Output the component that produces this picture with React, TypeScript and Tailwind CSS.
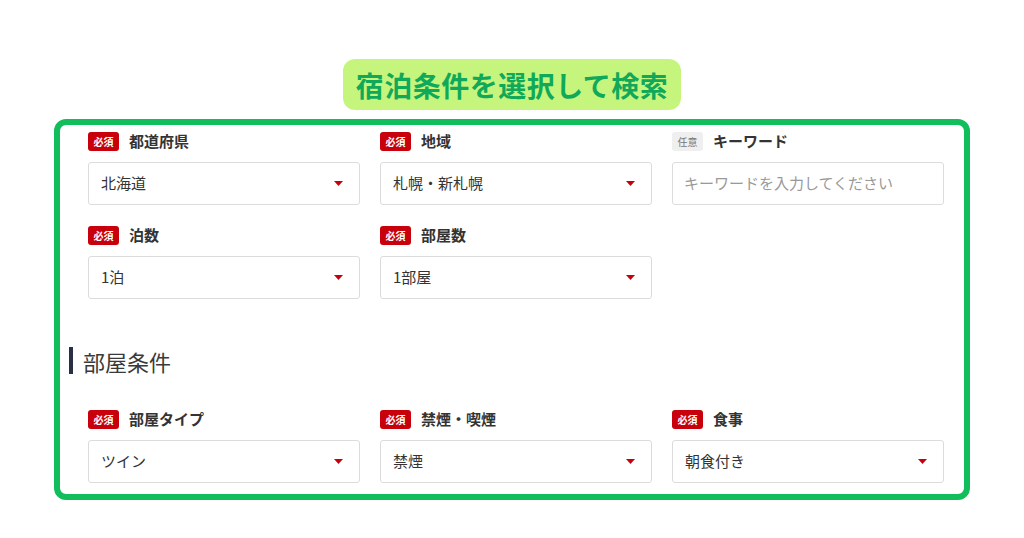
import React from 'react';

type Field = {
  label: string;
  required: boolean;
  value?: string;
  placeholder?: string;
};

const font = "font-['Noto_Sans_CJK_JP','Noto_Sans',sans-serif]";

function Badge({ required }: { required: boolean }) {
  return required ? (
    <span className="inline-flex h-[19px] w-[31px] items-center justify-center rounded-[3px] bg-[#c7000b] text-[10px] font-bold leading-none text-white">
      必須
    </span>
  ) : (
    <span className="inline-flex h-[19px] w-[31px] items-center justify-center rounded-[3px] bg-[#efefef] text-[10px] leading-none text-[#777]">
      任意
    </span>
  );
}

function FieldBox({ field }: { field: Field }) {
  return (
    <div className="flex flex-col">
      <div className="flex h-[19px] items-center gap-[10px]">
        <Badge required={field.required} />
        <span className="text-[15px] font-bold text-[#333]">{field.label}</span>
      </div>
      {field.placeholder ? (
        <div className="mt-[11px] flex h-[43px] items-center rounded-[3px] border border-[#dcdcdc] bg-white px-[11px] text-[15px] text-[#999]">
          {field.placeholder}
        </div>
      ) : (
        <div className="mt-[11px] flex h-[43px] items-center justify-between rounded-[3px] border border-[#dcdcdc] bg-white pl-[12px] pr-[16px] text-[15px] text-[#333]">
          <span>{field.value}</span>
          <svg width="9" height="5" viewBox="0 0 9 5">
            <path d="M0 0h9L4.5 5z" fill="#c7000b" />
          </svg>
        </div>
      )}
    </div>
  );
}

const topFields: (Field | null)[] = [
  { label: '都道府県', required: true, value: '北海道' },
  { label: '地域', required: true, value: '札幌・新札幌' },
  { label: 'キーワード', required: false, placeholder: 'キーワードを入力してください' },
  { label: '泊数', required: true, value: '1泊' },
  { label: '部屋数', required: true, value: '1部屋' },
  null,
];

const roomFields: Field[] = [
  { label: '部屋タイプ', required: true, value: 'ツイン' },
  { label: '禁煙・喫煙', required: true, value: '禁煙' },
  { label: '食事', required: true, value: '朝食付き' },
];

export default function App() {
  return (
    <div className={`${font} flex h-[538px] w-[1024px] flex-col items-center bg-white`}>
      {/* Title */}
      <div className="mt-[59px] flex h-[51px] items-center rounded-[12px] bg-[#c6f57e] px-[13px] text-[28px] font-bold leading-none tracking-[0.5px] text-[#10a95a]">
        宿泊条件を選択して検索
      </div>

      {/* Search panel */}
      <div className="mt-[9px] h-[381px] w-[916px] rounded-[12px] border-[6px] border-[#12bd5c] bg-white pl-[28px] pr-[20px] pt-[7px]">
        <div className="grid grid-cols-3 gap-x-[20px] gap-y-[21px]">
          {topFields.map((f, i) => (f ? <FieldBox key={i} field={f} /> : <div key={i} />))}
        </div>

        <div className="-ml-[19px] mt-[48px] flex h-[27px] items-center gap-[10px]">
          <span className="h-[27px] w-[4px] bg-[#2b2f45]" />
          <span className="text-[22px] leading-none text-[#3a3a3a]">部屋条件</span>
        </div>

        <div className="mt-[36px] grid grid-cols-3 gap-x-[20px]">
          {roomFields.map((f, i) => (
            <FieldBox key={i} field={f} />
          ))}
        </div>
      </div>
    </div>
  );
}
